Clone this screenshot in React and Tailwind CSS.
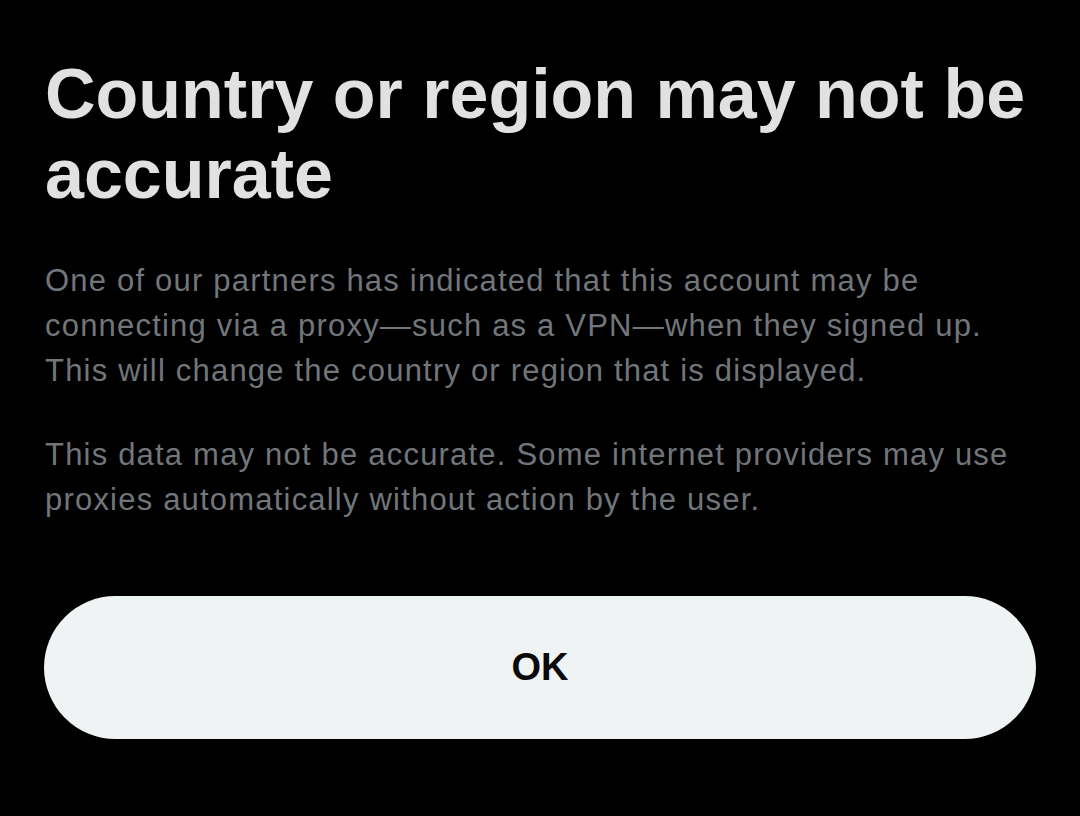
export default function App() {
  return (
    <div className="min-h-screen w-full bg-black font-['Liberation_Sans',Arial,sans-serif]">
      <div className="px-[45px] pt-[54px]">
        <h1 className="text-[70px] leading-[80px] font-bold text-[#e1e1e1]">
          Country or region may not be
          <br />
          accurate
        </h1>
        <div className="mt-[44px] flex flex-col gap-[39px] text-[31px] leading-[45px] tracking-[1.2px] text-[#71767b]">
          <p>
            One of our partners has indicated that this account may be connecting via a
            proxy—such as a VPN—when they signed up. This will change the country or region
            that is displayed.
          </p>
          <p>
            This data may not be accurate. Some internet providers may use proxies
            automatically without action by the user.
          </p>
        </div>
      </div>
      <div className="mt-[74px] px-[44px]">
        <button className="flex h-[143px] w-full items-center justify-center rounded-full bg-[#eff3f4] text-[38px] font-bold text-[#0a0a0a]">
          OK
        </button>
      </div>
    </div>
  )
}
